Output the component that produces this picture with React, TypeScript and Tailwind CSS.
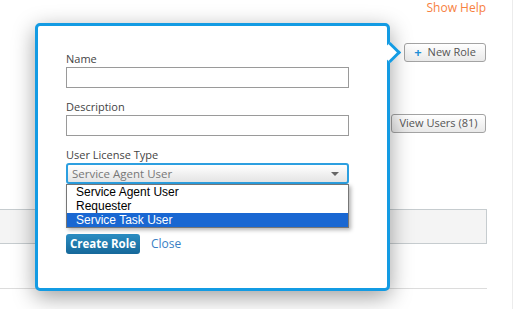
import React from "react";

const options = ["Service Agent User", "Requester", "Service Task User"];

function Field(props: { label: string }) {
    return (
        <div className="mb-[11px]">
            <div className="h-4 leading-4 text-[11px] text-[#444]">{props.label}</div>
            <div className="h-[21px] w-[283px] border border-[#9a9a9a] bg-white"></div>
        </div>
    );
}

export default function App() {
    return (
        <div className="relative w-[515px] h-[309px] overflow-hidden bg-white font-['Open_Sans',sans-serif]">
            {/* page behind the popup */}
            <div className="w-[513px] h-full border-r border-[#ececec] flex flex-col">
                <div className="flex justify-end pr-[26px] h-[15px]">
                    <span className="text-[12px] leading-[15px] text-[#f7813f]">Show Help</span>
                </div>
                <div className="flex justify-end pr-[26px] mt-[28px]">
                    <div className="h-[19px] w-[82px] flex items-center justify-center gap-[6px] border border-[#a3a3a3] rounded-[3px] bg-gradient-to-b from-white to-[#e9e9e9] text-[11px] text-[#555]">
                        <span className="text-[#1e8fd6] font-bold text-[13px] leading-none -mt-[1px]">+</span>
                        <span>New Role</span>
                    </div>
                </div>
                <div className="flex justify-end pr-[26px] mt-[52px]">
                    <div className="h-[19px] w-[95px] flex items-center justify-center border border-[#a3a3a3] rounded-[3px] bg-gradient-to-b from-white to-[#e9e9e9] text-[11px] text-[#555]">
                        View Users (81)
                    </div>
                </div>
                <div className="mt-[76px] w-[487px] h-[35px] bg-[#f4f4f4] border-y border-r border-[#c6cccf]"></div>
                <div className="mt-[44px] w-[487px] border-t border-[#dcdcdc]"></div>
            </div>

            {/* popup */}
            <div className="absolute left-[35px] top-[23px] w-[355px] h-[268px] bg-white border-[3px] border-[#139be3] rounded-[5px] shadow-[0_6px_22px_rgba(0,0,0,0.38)]">
                <div className="absolute right-[-11px] top-[19px] w-[15px] h-[15px] bg-white border-t-[3px] border-r-[3px] border-[#139be3] rotate-45"></div>
                <div className="pl-[28px] pt-[25px]">
                    <Field label="Name" />
                    <Field label="Description" />
                    <div className="h-4 leading-4 text-[11px] text-[#444]">User License Type</div>
                    <div className="relative w-[283px]">
                        <div className="h-[21px] flex items-center justify-between pl-[4px] pr-[8px] border-2 border-[#2c9fe0] rounded-[3px] bg-gradient-to-b from-white to-[#e4e4e4] text-[11.5px] text-[#777]">
                            <span>Service Agent User</span>
                            <span className="w-0 h-0 border-x-[4px] border-x-transparent border-t-[4px] border-t-[#666]"></span>
                        </div>
                        <div className="absolute left-0 top-[21px] w-[283px] border border-[#767676] bg-white shadow-[2px_2px_4px_rgba(0,0,0,0.3)] font-['Liberation_Sans',Arial,sans-serif] text-[12px]">
                            {options.map((o, i) => (
                                <div key={o} className={"h-[14px] leading-[14px] pl-[9px] " + (i === 2 ? "bg-[#1967d2] text-white" : "text-black")}>
                                    {o}
                                </div>
                            ))}
                        </div>
                    </div>
                    <div className="mt-[50px] flex items-center gap-[11px]">
                        <div className="h-[20px] w-[74px] flex items-center justify-center rounded-[3px] bg-gradient-to-b from-[#2b8dc2] to-[#15689a] text-white text-[11.5px] font-bold">
                            Create Role
                        </div>
                        <span className="text-[12px] text-[#3a7fc5]">Close</span>
                    </div>
                </div>
            </div>
        </div>
    );
}
